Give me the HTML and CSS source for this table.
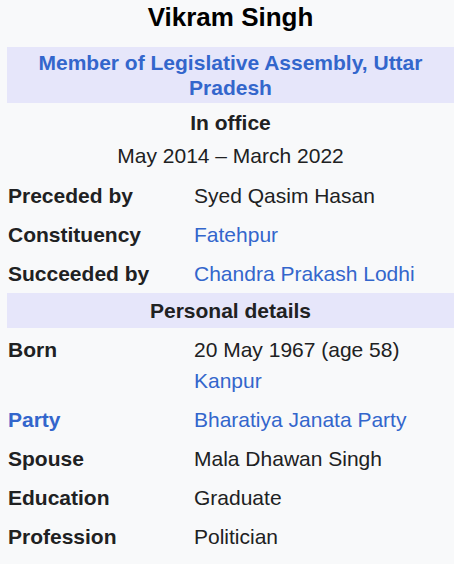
FILE: index.html
```html
<!DOCTYPE html>
<html lang="en">
<head>
<meta charset="utf-8">
<title>Vikram Singh</title>
<link rel="stylesheet" href="styles.css">
</head>
<body>
<div class="infobox">
  <div class="title">Vikram Singh</div>
  <div class="band"><a class="link" href="#">Member of Legislative Assembly, Uttar Pradesh</a></div>
  <div class="office-label">In office</div>
  <div class="office-dates">May 2014 – March 2022</div>
  <div class="rows">
    <div class="label">Preceded by</div>
    <div class="value">Syed Qasim Hasan</div>
    <div class="label">Constituency</div>
    <div class="value"><a class="link" href="#">Fatehpur</a></div>
    <div class="label">Succeeded by</div>
    <div class="value"><a class="link" href="#">Chandra Prakash Lodhi</a></div>
  </div>
  <div class="band band-plain">Personal details</div>
  <div class="rows rows-first">
    <div class="label">Born</div>
    <div class="value">20 May 1967 (age 58)<br><a class="link" href="#">Kanpur</a></div>
    <div class="label"><a class="link" href="#">Party</a></div>
    <div class="value"><a class="link" href="#">Bharatiya Janata Party</a></div>
    <div class="label">Spouse</div>
    <div class="value">Mala Dhawan Singh</div>
    <div class="label">Education</div>
    <div class="value">Graduate</div>
    <div class="label">Profession</div>
    <div class="value">Politician</div>
  </div>
</div>
</body>
</html>
```
FILE: styles.css
```css
html, body {
  margin: 0;
  padding: 0;
  background: #f8f9fa;
}
body {
  font-family: "Liberation Sans", Arial, sans-serif;
  font-size: 21px;
  color: #202122;
  overflow: hidden;
}
.infobox {
  width: 447px;
  margin-left: 7px;
}
.link {
  color: #3366cc;
  text-decoration: none;
}
.title {
  font-size: 26px;
  font-weight: bold;
  color: #000;
  line-height: 34px;
  text-align: center;
  margin-bottom: 13px;
}
.band {
  background: #e6e6fa;
  font-weight: bold;
  line-height: 25px;
  padding: 3px 8px;
  text-align: center;
}
.band-plain {
  padding: 5px 8px;
}
.office-label {
  font-weight: bold;
  text-align: center;
  line-height: 31px;
  padding: 4px 0 1px;
}
.office-dates {
  text-align: center;
  line-height: 31px;
  padding: 1px 0 4px;
}
.rows {
  display: grid;
  grid-template-columns: 186px 1fr;
  line-height: 31px;
  padding-top: 1px;
}
.rows-first {
  padding-top: 2px;
}
.label,
.value {
  padding: 4px 0 4px 1px;
}
.label {
  font-weight: bold;
}
```
